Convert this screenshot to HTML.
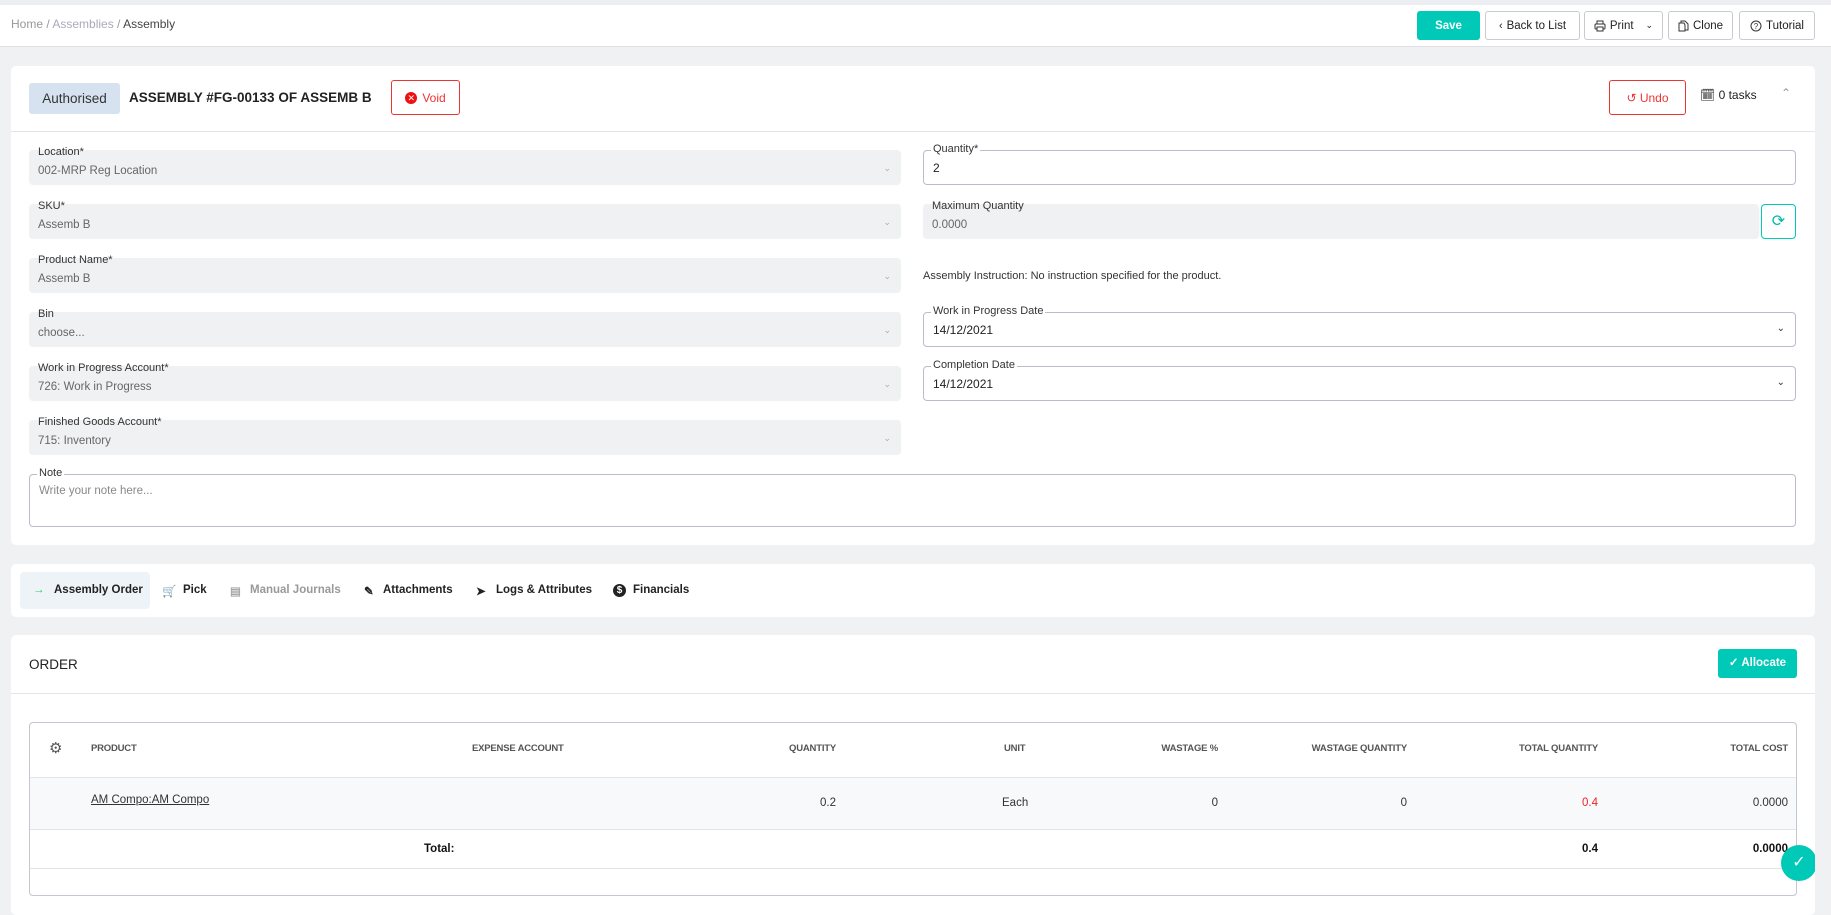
<!DOCTYPE html>
<html><head><meta charset="utf-8"><style>
*{box-sizing:border-box;margin:0;padding:0}
body{width:1831px;height:902px;background:#f0f1f3;font-family:"Liberation Sans",sans-serif;color:#222;position:relative;overflow:hidden;font-size:13px}
.a{position:absolute}
.top{left:0;top:0;width:1831px;height:47px;background:#fff;border-top:5px solid #eceef1;border-bottom:1px solid #dfe1e5}
.btn{position:absolute;top:11px;height:29px;border:1px solid #c9cbd3;border-radius:3px;background:#fff;font-size:11.5px;display:flex;align-items:center;justify-content:center;gap:4px;color:#222}
.card{position:absolute;background:#fff;border-radius:5px}
.fld{position:absolute;height:35px;border-radius:4px;background:#f0f1f3}
.fld .v{position:absolute;left:9px;top:15px;font-size:11.5px;color:#666}
.fld .l{position:absolute;left:9px;top:-4px;font-size:11px;color:#333}
.fld .c{position:absolute;right:10px;top:13px;font-size:9px;color:#aaa}
.ofld{position:absolute;height:35px;border-radius:4px;background:#fff;border:1px solid #b9bccb}
.ofld .l{position:absolute;left:7px;top:-8px;font-size:11px;color:#333;background:#fff;padding:0 2px}
.ofld .v{position:absolute;left:9px;top:10px;font-size:12px;color:#222}
.ofld .c{position:absolute;right:10px;top:10px;font-size:10px;color:#333}
.th{position:absolute;top:743px;font-size:9.5px;color:#555;font-weight:bold;letter-spacing:-.2px}
.td{position:absolute;top:797px;font-size:11.5px;color:#333}
.tab{position:absolute;top:584px;font-size:11.5px;font-weight:bold;color:#222}
</style></head><body>
<div class="a top"></div>
<div class="a" style="left:11px;top:17px;font-size:12px;color:#999">Home / <span style="color:#aab">Assemblies</span> / <span style="color:#444">Assembly</span></div>
<div class="btn" style="left:1417px;width:63px;background:#00c9b7;border-color:#00c9b7;color:#fff;font-weight:bold">Save</div>
<div class="btn" style="left:1485px;width:95px"><span style="font-size:11px">‹</span> Back to List</div>
<div class="btn" style="left:1584px;width:79px"><svg width="12" height="12" viewBox="0 0 12 12"><rect x="3" y="1" width="6" height="3" fill="none" stroke="#333"/><rect x="1" y="4" width="10" height="5" rx="1" fill="none" stroke="#333"/><rect x="3" y="7" width="6" height="4" fill="#fff" stroke="#333"/></svg>Print <span style="font-size:9px;margin-left:8px">⌄</span></div>
<div class="btn" style="left:1668px;width:65px"><svg width="11" height="12" viewBox="0 0 11 12"><path d="M3 3V1h4l3 3v6H7M1 3h5l1 2v6H1z" fill="none" stroke="#333"/></svg>Clone</div>
<div class="btn" style="left:1739px;width:76px"><svg width="12" height="12" viewBox="0 0 12 12"><circle cx="6" cy="6" r="5" fill="none" stroke="#333"/><text x="6" y="9" font-size="8" text-anchor="middle" fill="#333" font-family="Liberation Sans">?</text></svg>Tutorial</div>

<div class="card" style="left:11px;top:66px;width:1804px;height:479px"></div>
<div class="a" style="left:29px;top:83px;width:91px;height:31px;background:#d6e2f0;border-radius:3px;font-size:13.5px;color:#333;text-align:center;line-height:31px">Authorised</div>
<div class="a" style="left:129px;top:90px;font-size:13.5px;font-weight:bold;color:#222">ASSEMBLY #FG-00133 OF ASSEMB B</div>
<div class="a" style="left:391px;top:80px;width:69px;height:35px;border:1px solid #e33;border-radius:3px;color:#e33;font-size:12px;display:flex;align-items:center;justify-content:center;gap:5px"><span style="width:12px;height:12px;border-radius:50%;background:#e11;color:#fff;font-size:9px;line-height:12px;text-align:center">✕</span>Void</div>
<div class="a" style="left:1609px;top:80px;width:77px;height:35px;border:1px solid #e33;border-radius:3px;color:#e33;font-size:12px;display:flex;align-items:center;justify-content:center;gap:4px">↺ Undo</div>
<div class="a" style="left:1700px;top:88px;font-size:12px;color:#222">🗓 0 tasks</div>
<div class="a" style="left:1781px;top:86px;font-size:12px;color:#999">⌃</div>
<div class="a" style="left:11px;top:131px;width:1804px;height:1px;background:#e3e4e8"></div>

<div class="fld" style="left:29px;top:150px;width:872px"><span class="l">Location*</span><span class="v">002-MRP Reg Location</span><span class="c">⌄</span></div>
<div class="fld" style="left:29px;top:204px;width:872px"><span class="l">SKU*</span><span class="v">Assemb B</span><span class="c">⌄</span></div>
<div class="fld" style="left:29px;top:258px;width:872px"><span class="l">Product Name*</span><span class="v">Assemb B</span><span class="c">⌄</span></div>
<div class="fld" style="left:29px;top:312px;width:872px"><span class="l">Bin</span><span class="v">choose...</span><span class="c">⌄</span></div>
<div class="fld" style="left:29px;top:366px;width:872px"><span class="l">Work in Progress Account*</span><span class="v">726: Work in Progress</span><span class="c">⌄</span></div>
<div class="fld" style="left:29px;top:420px;width:872px"><span class="l">Finished Goods Account*</span><span class="v">715: Inventory</span><span class="c">⌄</span></div>

<div class="ofld" style="left:923px;top:150px;width:873px"><span class="l">Quantity*</span><span class="v">2</span></div>
<div class="fld" style="left:923px;top:204px;width:836px"><span class="l">Maximum Quantity</span><span class="v">0.0000</span></div>
<div class="a" style="left:1761px;top:204px;width:35px;height:35px;border:1px solid #00c9b7;border-radius:4px;color:#00b8a8;font-size:16px;text-align:center;line-height:33px">⟳</div>
<div class="a" style="left:923px;top:270px;font-size:11px;color:#333">Assembly Instruction: No instruction specified for the product.</div>
<div class="ofld" style="left:923px;top:312px;width:873px"><span class="l">Work in Progress Date</span><span class="v">14/12/2021</span><span class="c">⌄</span></div>
<div class="ofld" style="left:923px;top:366px;width:873px"><span class="l">Completion Date</span><span class="v">14/12/2021</span><span class="c">⌄</span></div>
<div class="ofld" style="left:29px;top:474px;width:1767px;height:53px"><span class="l">Note</span><span class="v" style="color:#888;top:10px;font-size:11.5px">Write your note here...</span></div>

<div class="card" style="left:11px;top:564px;width:1804px;height:53px"></div>
<div class="a" style="left:20px;top:572px;width:130px;height:37px;background:#eef3f8;border-radius:4px"></div>
<div class="tab" style="left:33px;color:#2c6">→</div><div class="tab" style="left:54px">Assembly Order</div>
<div class="tab" style="left:162px;color:#f0a020">🛒</div><div class="tab" style="left:183px">Pick</div>
<div class="tab" style="left:230px;color:#aaa">▤</div><div class="tab" style="left:250px;color:#999">Manual Journals</div>
<div class="tab" style="left:364px">✎</div><div class="tab" style="left:383px">Attachments</div>
<div class="tab" style="left:476px">➤</div><div class="tab" style="left:496px">Logs &amp; Attributes</div>
<div class="tab" style="left:613px"><span style="display:inline-block;width:13px;height:13px;border-radius:50%;background:#222;color:#fff;font-size:10px;text-align:center;line-height:13px">$</span></div><div class="tab" style="left:633px">Financials</div>

<div class="card" style="left:11px;top:635px;width:1804px;height:280px"></div>
<div class="a" style="left:29px;top:657px;font-size:13.5px;color:#222">ORDER</div>
<div class="a" style="left:1718px;top:649px;width:79px;height:29px;background:#00c9b7;border-radius:3px;color:#fff;font-size:11.5px;font-weight:bold;text-align:center;line-height:29px">✓ Allocate</div>
<div class="a" style="left:11px;top:693px;width:1804px;height:1px;background:#e3e4e8"></div>
<div class="a" style="left:29px;top:722px;width:1768px;height:174px;border:1px solid #c4c6d0;border-radius:4px"></div>
<div class="a" style="left:30px;top:777px;width:1766px;height:53px;background:#f8f9fb;border-top:1px solid #e3e4e8;border-bottom:1px solid #e3e4e8"></div>
<div class="a" style="left:30px;top:868px;width:1766px;height:1px;background:#e3e4e8"></div>
<div class="a" style="left:49px;top:739px;font-size:15px;color:#555">⚙</div>
<div class="th" style="left:91px">PRODUCT</div>
<div class="th" style="left:472px">EXPENSE ACCOUNT</div>
<div class="th" style="right:995px">QUANTITY</div>
<div class="th" style="left:1004px">UNIT</div>
<div class="th" style="right:613px">WASTAGE %</div>
<div class="th" style="right:424px">WASTAGE QUANTITY</div>
<div class="th" style="right:233px">TOTAL QUANTITY</div>
<div class="th" style="right:43px">TOTAL COST</div>
<div class="td" style="left:91px;top:794px;text-decoration:underline">AM Compo:AM Compo</div>
<div class="td" style="right:995px">0.2</div>
<div class="td" style="left:1002px">Each</div>
<div class="td" style="right:613px">0</div>
<div class="td" style="right:424px">0</div>
<div class="td" style="right:233px;color:#e22">0.4</div>
<div class="td" style="right:43px">0.0000</div>
<div class="td" style="left:424px;top:843px;font-weight:bold;color:#111">Total:</div>
<div class="td" style="right:233px;top:843px;font-weight:bold;color:#111">0.4</div>
<div class="td" style="right:43px;top:843px;font-weight:bold;color:#111">0.0000</div>
<div class="a" style="left:1781px;top:845px;width:36px;height:36px;border-radius:50%;background:#00c9b7;color:#fff;font-size:16px;text-align:center;line-height:36px">✓</div>
<div class="a" style="left:1815px;top:47px;width:16px;height:855px;background:#f0f1f3"></div>
</body></html>
